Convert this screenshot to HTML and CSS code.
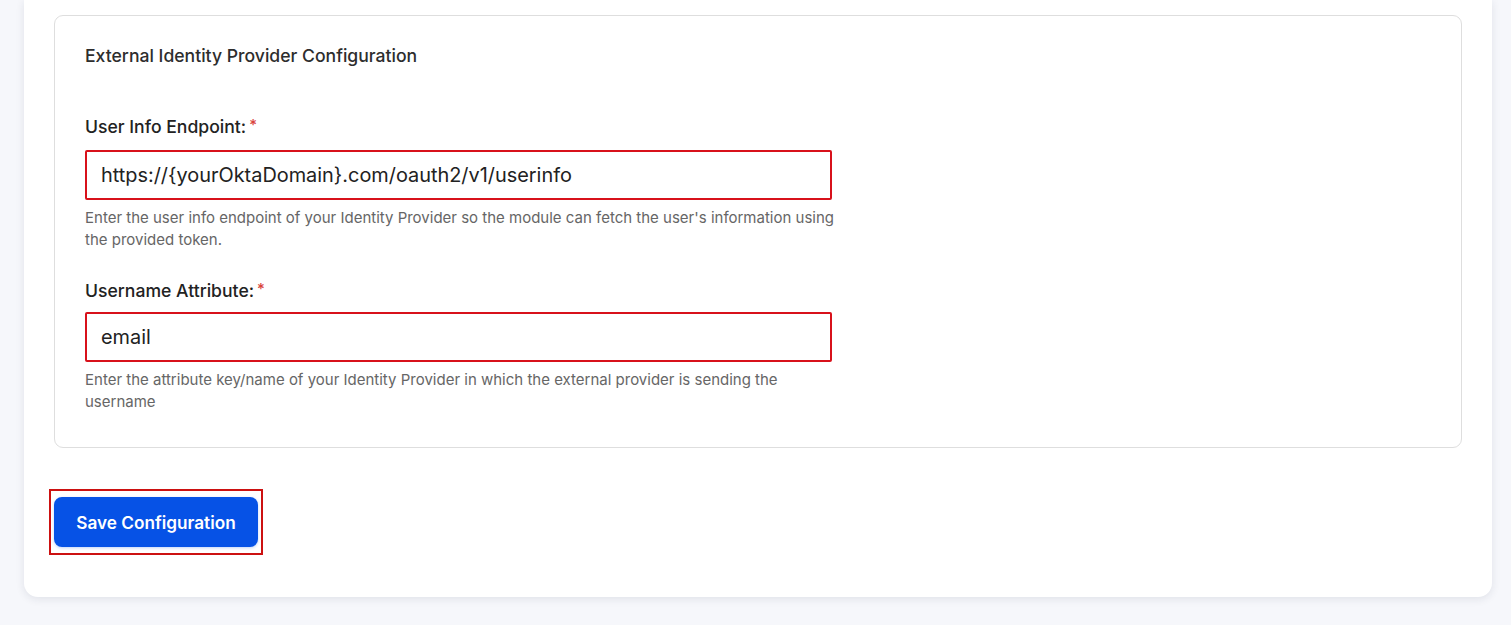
FILE: index.html
```html
<!DOCTYPE html>
<html lang="en">
<head>
<meta charset="utf-8">
<title>External Identity Provider Configuration</title>
<link rel="stylesheet" href="styles.css">
</head>
<body>
<div class="page">
  <div class="card">
    <section class="panel">
      <h2 class="panel-title">External Identity Provider Configuration</h2>

      <div class="field field-first">
        <label class="field-label" for="userinfo">User Info Endpoint:<span class="req">*</span></label>
        <input class="field-input" id="userinfo" type="text" value="https://{yourOktaDomain}.com/oauth2/v1/userinfo">
        <p class="field-help">Enter the user info endpoint of your Identity Provider so the module can fetch the user's information using the provided token.</p>
      </div>

      <div class="field field-second">
        <label class="field-label" for="username">Username Attribute:<span class="req">*</span></label>
        <input class="field-input" id="username" type="text" value="email">
        <p class="field-help">Enter the attribute key/name of your Identity Provider in which the external provider is sending the username</p>
      </div>
    </section>

    <div class="actions">
      <span class="highlight">
        <button class="btn-primary" type="button">Save Configuration</button>
      </span>
    </div>
  </div>
</div>
</body>
</html>
```

FILE: styles.css
```css
* {
  box-sizing: border-box;
}

html, body {
  margin: 0;
  padding: 0;
  background: #f6f7fb;
  font-family: Inter, "Noto Sans", "Liberation Sans", sans-serif;
}

.page {
  padding: 0 19px 28px 24px;
}

.card {
  background: #ffffff;
  border-radius: 0 0 14px 14px;
  box-shadow: 0 2px 8px rgba(30, 40, 70, 0.10);
  padding: 15px 30px 42px 30px;
}

.panel {
  border: 1px solid #dedede;
  border-radius: 9px;
  padding: 28px 30px 34px 30px;
}

.panel-title {
  margin: 0;
  font-size: 17.6px;
  line-height: 24px;
  font-weight: 500;
  color: #2d2d2d;
}

.field {
  width: 747px;
  margin-top: 28px;
}

.field-first {
  margin-top: 47px;
}

.field-label {
  display: block;
  font-size: 17.6px;
  line-height: 24px;
  font-weight: 500;
  color: #222222;
  margin-bottom: 10px;
}

.field-second .field-label {
  margin-bottom: 8px;
}

.req {
  color: #d9423b;
  font-size: 15px;
  position: relative;
  top: -3px;
  margin-left: 3px;
}

.field-input {
  display: block;
  width: 747px;
  height: 50px;
  border: 2px solid #d8111b;
  border-radius: 2px;
  padding: 0 14px;
  font-family: Inter, "Noto Sans", "Liberation Sans", sans-serif;
  font-size: 19.9px;
  color: #222222;
  background: #ffffff;
  outline: none;
}

.field-help {
  width: 756px;
  margin: 7px 0 0 0;
  font-size: 15px;
  line-height: 22px;
  color: #666666;
}

.actions {
  margin-top: 41px;
}

.highlight {
  display: inline-block;
  border: 2px solid #cc1111;
  padding: 6px 3px;
  margin-left: -5px;
}

.btn-primary {
  display: block;
  width: 204px;
  height: 50px;
  border: none;
  border-radius: 8px;
  background: #0652e6;
  color: #ffffff;
  font-family: Inter, "Noto Sans", "Liberation Sans", sans-serif;
  font-size: 17.2px;
  font-weight: 600;
  box-shadow: 0 1px 3px rgba(6, 82, 230, 0.25);
  cursor: pointer;
}
```
